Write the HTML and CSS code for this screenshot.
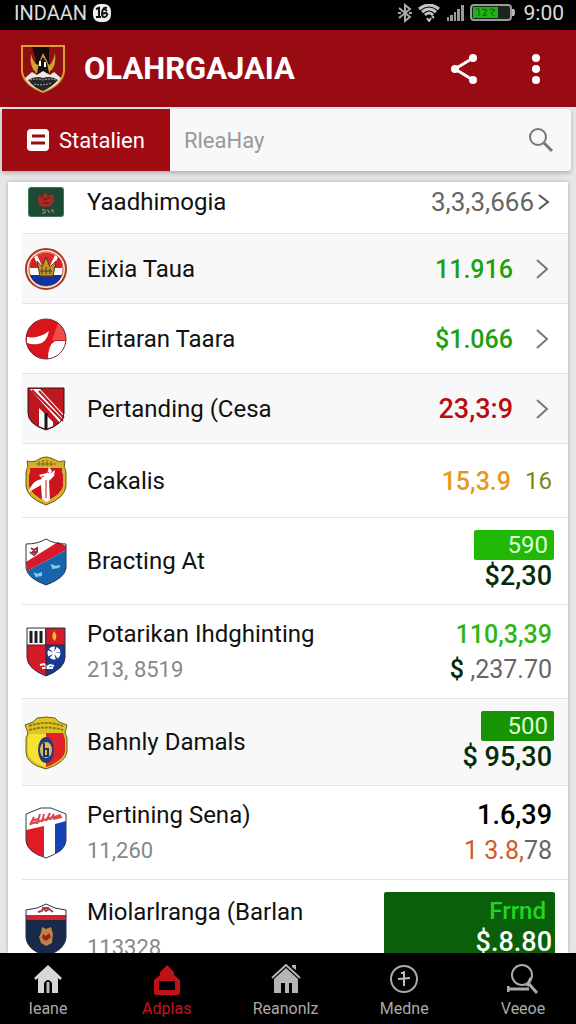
FILE: index.html
```
<!DOCTYPE html>
<html lang="id">
<head>
    <title>OLAHRGAJAIA</title>
    <meta charset="UTF-8">
    <meta name="viewport" content="width=device-width, initial-scale=1.0">
    <link rel="stylesheet" href="styles.css">
</head>
<body>
    <div class="status-bar">
        <span class="carrier">INDAAN</span>
        <svg width="18" height="18" viewBox="0 0 18 18"><rect width="18" height="18" rx="7" fill="#eee"/><path d="M3 5l3-1v9M3 13h5M14 4c-4-1-5 3-5 6 0 4 4 4 5 1 1-2-2-3-4-1M10 4l4 3" fill="none" stroke="#111" stroke-width="2"/></svg>
        <div class="status-icons">
            <svg width="14" height="20" viewBox="0 0 14 20"><path d="M1 5l11 9-5 4V2l5 4-11 9M0 10h3M11 10h3" fill="none" stroke="#aaa" stroke-width="2"/></svg>
            <svg width="22" height="18" viewBox="0 0 22 18"><path d="M1 5q10-8 20 0M4 8q7-6 14 0M7 11q4-4 8 0" fill="none" stroke="#c4c4c4" stroke-width="3"/><path d="M9 14l2 3 2-3M14 12l2 2" fill="none" stroke="#c4c4c4" stroke-width="2"/></svg>
            <svg width="18" height="18" viewBox="0 0 18 18"><path d="M1 13h2v4H1zM4 11h3v6H4zM8 8h2v9H8zM11 5h3v12h-3zM15 1h3v16h-3z" fill="#999"/></svg>
            <svg width="46" height="18" viewBox="0 0 46 18"><rect x="1" y="1" width="40" height="15" rx="3" fill="#1c2420" stroke="#9a9a9a" stroke-width="2"/><path d="M42 5h2q2 3 0 7h-2z" fill="#bbb"/><rect x="3" y="3" width="25" height="11" fill="#1fb012"/><path d="M6 5h3v7M12 5l5 1-4 6 4-1M20 5l5 1-4 3 3 3" fill="none" stroke="#0a5a08" stroke-width="1"/></svg>
            <span class="clock">9:00</span>
        </div>
    </div>

    <header class="header">
        <svg class="logo" width="46" height="50" viewBox="0 0 46 50">
            <path d="M1 1h44v26q-1 14-22 22Q2 41 1 27z" fill="#d9a32b"/>
            <path d="M3 3h40v24q-1 12-20 20Q4 39 3 27z" fill="#8f1013"/>
            <path d="M12 3h17v13l3 12H14l2-12z" fill="#160b0a"/>
            <path d="M11 10q-2 12 5 19h13q8-7 6-20-2 10-6 12l-6-12-5 12q-5-2-7-11z" fill="#d0a236"/>
            <path d="M17 29l2-10 4-6 4 6 2 10z" fill="#17120f"/>
            <path d="M20 17v5M25 18v5" stroke="#fff" stroke-width="2"/>
            <path d="M5 34l7-6 5 3 6-4 7 4 4-3 7 6q-4 9-18 13Q9 43 5 34z" fill="#eee8e2"/>
            <path d="M8 36q8-5 15-2 8-3 15 2-6 7-15 11-9-3-15-11z" fill="#252629"/>
            <path d="M10 36q7-2 13 0 7-2 13 0M14 40q9 2 18-1" fill="none" stroke="#aaa" stroke-width="1" stroke-dasharray="2 1"/>
        </svg>
        <h1>OLAHRGAJAIA</h1>
        <button class="icon-button share" aria-label="Share">
            <svg width="28" height="32" viewBox="0 0 28 32"><path d="M23 5L5 16l18 11" fill="none" stroke="#fff" stroke-width="3"/><circle cx="23" cy="5" r="4" fill="#fff"/><circle cx="5" cy="16" r="4" fill="#fff"/><circle cx="23" cy="27" r="4" fill="#fff"/></svg>
        </button>
        <button class="icon-button" aria-label="More">
            <svg width="10" height="32" viewBox="0 0 10 32"><circle cx="5" cy="5" r="4" fill="#fff"/><circle cx="5" cy="16" r="4" fill="#fff"/><circle cx="5" cy="27" r="4" fill="#fff"/></svg>
        </button>
    </header>

    <div class="toolbar">
        <button class="filter">
            <svg width="22" height="22" viewBox="0 0 22 22"><rect width="22" height="22" rx="4" fill="#fff"/><path d="M5 7h13M4 14h14" stroke="#9c0a12" stroke-width="3"/></svg>
            Statalien
        </button>
        <input type="text" class="search" placeholder="RleaHay" aria-label="Search">
        <button class="icon-button search-button" aria-label="Search">
            <svg width="26" height="26" viewBox="0 0 26 26"><circle cx="10" cy="10" r="8" fill="none" stroke="#777" stroke-width="2"/><path d="M16 16l8 8" stroke="#777" stroke-width="3"/></svg>
        </button>
    </div>

    <main class="list">
        <div class="row first">
            <div class="crest"><svg width="36" height="30" viewBox="0 0 36 30"><rect width="36" height="30" rx="3" fill="#3f7a56"/><rect x="1" y="1" width="34" height="28" rx="2" fill="#1c4a35"/><path d="M10 8l4 2 3-5 3 4 5-2 1 6q-1 7-8 7t-8-6z" fill="#a32a26"/><path d="M14 10l3 3 5-3M15 16h6" fill="none" stroke="#571518" stroke-width="1"/><path d="M14 23h3v3h-3M19 23l2 1v2M23 23h2v3" fill="none" stroke="#c98a6a" stroke-width="1"/></svg></div>
            <div class="name">Yaadhimogia</div>
            <div class="amount gray">3,3,3,666</div>
            <svg class="chevron" width="18" height="20" viewBox="0 0 18 20"><path d="M5 3l9 7-9 7" fill="none" stroke="#555" stroke-width="2"/></svg>
        </div>
        <div class="row shade">
            <div class="crest"><svg width="42" height="44" viewBox="0 0 42 44"><circle cx="21" cy="22" r="20" fill="#f5e6d0" stroke="#a8372a" stroke-width="2"/><circle cx="21" cy="22" r="17" fill="#fff" stroke="#cc4a35" stroke-width="1"/><path d="M12 8q9-5 18 0l-5 11h-8z" fill="#e02a2e"/><path d="M5 17q1-5 4-7l5 11H5zM37 17q-1-5-4-7l-5 11h9z" fill="#d91f25"/><path d="M5 28h32q-4 11-16 11T5 28z" fill="#12329c"/><path d="M12 14l5 6 4-10 4 10 6-6-3 15H15z" fill="#c6952a" stroke="#523913" stroke-width="1"/><path d="M15 24h12M17 21v6M21 20v7M25 21v6" stroke="#523913" stroke-width="1"/></svg></div>
            <div class="name">Eixia Taua</div>
            <div class="amount green">11.916</div>
            <svg class="chevron" width="20" height="20" viewBox="0 0 20 20"><path d="M5 1l10 9-10 9" fill="none" stroke="#777" stroke-width="2"/></svg>
        </div>
        <div class="row">
            <div class="crest"><svg width="42" height="44" viewBox="0 0 42 44"><circle cx="21" cy="22" r="20" fill="#d9141b"/><path d="M33 6q8 7 8 17H27z" fill="#f04a49"/><path d="M2 20q12 2 22-6-2 12-11 13-6 1-11-1zM41 24H30q-7 4-7 18 17-2 18-18z" fill="#fff"/><circle cx="21" cy="22" r="20" fill="none" stroke="#6d3137" stroke-width="1"/></svg></div>
            <div class="name">Eirtaran Taara</div>
            <div class="amount green">$1.066</div>
            <svg class="chevron" width="20" height="20" viewBox="0 0 20 20"><path d="M5 1l10 9-10 9" fill="none" stroke="#777" stroke-width="2"/></svg>
        </div>
        <div class="row shade">
            <div class="crest"><svg width="38" height="44" viewBox="0 0 38 44"><path d="M1 1h36v25q0 11-18 17Q1 37 1 26z" fill="#bd1820"/><path d="M3 2h10l24 26v5l-3 4z" fill="#fff"/><path d="M5 3l31 31M12 4l25 27" stroke="#bd1820" stroke-width="2"/><path d="M12 21l14 14v4l-7 3-7-3z" fill="#fff"/><path d="M19 26v16" stroke="#151515" stroke-width="3"/><path d="M1 1h36v25q0 11-18 17Q1 37 1 26z" fill="none" stroke="#221618" stroke-width="1"/></svg></div>
            <div class="name">Pertanding (Cesa</div>
            <div class="amount red">23,3:9</div>
            <svg class="chevron" width="20" height="20" viewBox="0 0 20 20"><path d="M5 1l10 9-10 9" fill="none" stroke="#777" stroke-width="2"/></svg>
        </div>
        <div class="row">
            <div class="crest"><svg width="42" height="50" viewBox="0 0 42 50"><path d="M2 5q8 2 12-2 7-4 14 0 5 4 12 2-2 5 1 11v14q-1 12-20 19Q2 42 1 30V16q3-6 1-11z" fill="#d5b12e" stroke="#6c5713" stroke-width="1"/><path d="M5 12h32q-1 4 1 7v11q-2 9-17 15Q6 39 4 30V19q2-3 1-7z" fill="#cd151d"/><path d="M5 32q4-8 12-9l-3-4 8-2 2-6 3 4-2 3 5-4-1 6-5 5 1 19-4 2-4-3-1-14-12 7z" fill="#fff"/><path d="M14 17q7-3 10 0M14 22l5-2M21 24v18" fill="none" stroke="#cd151d" stroke-width="1"/><path d="M11 8h20M14 5v5M18 4v6M22 4v6M26 5v5" stroke="#79641a" stroke-width="1"/></svg></div>
            <div class="name">Cakalis</div>
            <div class="amount orange">15,3.9</div>
            <div class="amount olive">16</div>
        </div>
        <div class="row">
            <div class="crest"><svg width="42" height="48" viewBox="0 0 42 48"><path d="M1 6q12 0 20-5 8 5 20 5v24q-1 10-20 17Q2 40 1 30z" fill="#fff"/><path d="M41 12v18q-1 10-20 17Q5 41 2 33z" fill="#1865ae"/><path d="M1 24L33 4l8 4v4L2 33z" fill="#d8182b"/><path d="M6 10l3 2 3-2v4l-3 3-4-3M7 14h4" fill="none" stroke="#92324a" stroke-width="2"/><path d="M26 27l4 2 5-1M27 30l7-1M9 35l3 2 5-2M10 38l7-1" fill="none" stroke="#81cfe2" stroke-width="2"/><path d="M1 6q12 0 20-5 8 5 20 5v24q-1 10-20 17Q2 40 1 30z" fill="none" stroke="#28364a" stroke-width="1"/></svg></div>
            <div class="name">Bracting At</div>
            <div class="values">
                <span class="badge">590</span>
                <span class="amount dark">$2,30</span>
            </div>
        </div>
        <div class="row">
            <div class="crest"><svg width="40" height="50" viewBox="0 0 40 50"><path d="M1 1h38v30q-1 11-19 18Q2 42 1 31z" fill="#d31c27"/><path d="M20 18h19v13q-1 11-19 18z" fill="#173b91"/><path d="M1 1h18v17H1z" fill="#fff"/><path d="M5 4v12M10 4v12M15 4v12" stroke="#1b1b20" stroke-width="3"/><path d="M28 4q4 4 1 10-5-3-1-10z" fill="#f1bc29"/><circle cx="28" cy="26" r="4" fill="none" stroke="#fff" stroke-width="5" stroke-dasharray="4 1"/><circle cx="28" cy="26" r="2" fill="#fff"/><path d="M14 38l4-1 3 3 3-2 4 1M16 41h11" fill="none" stroke="#fff" stroke-width="2"/><path d="M1 18h38M20 1v48" stroke="#521a32" stroke-width="1"/><path d="M1 1h38v30q-1 11-19 18Q2 42 1 31z" fill="none" stroke="#25304b" stroke-width="1"/></svg></div>
            <div class="name">Potarikan Ihdghinting<small>213, 8519</small></div>
            <div class="values">
                <span class="amount lime">110,3,39</span>
                <span class="amount gray"><b class="dark">$</b> ,237.70</span>
            </div>
        </div>
        <div class="row shade">
            <div class="crest"><svg width="44" height="54" viewBox="0 0 44 54"><path d="M1 9l8-3 4-4 9-1 9 1 4 4 8 3-2 8 2 5v14q-2 11-21 17Q2 48 2 36V22l2-5z" fill="#dfc426" stroke="#67602b" stroke-width="1"/><path d="M22 17h17l2 6v13q-2 9-19 15z" fill="#e0232b"/><path d="M5 18h17v33Q5 46 4 36V22z" fill="#f5e332"/><ellipse cx="22" cy="34" rx="8" ry="13" fill="#243a79"/><ellipse cx="22" cy="34" rx="6" ry="8" fill="#d9bf5d"/><path d="M20 27v13h4v-7h-4" fill="none" stroke="#25345d" stroke-width="2"/><path d="M5 10q17-6 34 0M5 14q17-5 34 0" fill="none" stroke="#8d7717" stroke-width="2" stroke-dasharray="3 1"/></svg></div>
            <div class="name">Bahnly Damals</div>
            <div class="values">
                <span class="badge narrow">500</span>
                <span class="amount dark">$ 95,30</span>
            </div>
        </div>
        <div class="row">
            <div class="crest"><svg width="42" height="52" viewBox="0 0 42 52"><path d="M1 7l15-6h10l15 6v27q-1 10-20 17Q2 45 1 34z" fill="#fff"/><path d="M1 23l18-4v31Q2 45 1 34z" fill="#e01b24"/><path d="M30 17l11-3v20q-1 9-11 13z" fill="#1742b3"/><path d="M5 18l4-8M6 14l7-2M12 17l3-10M17 15l2-8M21 14l4-8M25 13l4-6M5 17l31-9M28 12l9-2" stroke="#d9484e" stroke-width="2"/><path d="M1 7l15-6h10l15 6v27q-1 10-20 17Q2 45 1 34z" fill="none" stroke="#333a4c" stroke-width="1"/></svg></div>
            <div class="name">Pertining Sena)<small>11,260</small></div>
            <div class="values">
                <span class="amount black">1.6,39</span>
                <span class="amount gray"><span class="rust">1 3.8,</span>78</span>
            </div>
        </div>
        <div class="row last">
            <div class="crest"><svg width="42" height="54" viewBox="0 0 42 54"><path d="M1 7q12-1 20-6 8 5 20 6v28q-1 12-20 18Q2 47 1 35z" fill="#fff"/><path d="M1 17h40v18q-1 12-20 18Q2 47 1 35z" fill="#18294a"/><path d="M1 12h40v5H1z" fill="#d7212c"/><path d="M13 9l4-1 1-3 3 3 3-2 4 3M18 5h6" fill="none" stroke="#a63c4a" stroke-width="2"/><path d="M17 24l4 2 5-2 2 7-1 9-6 3-5-3-2-6 2-4z" fill="#bb8442"/><path d="M18 31l3 2 3-3 2 4-5 4-4-3z" fill="#a61a24"/><path d="M1 7q12-1 20-6 8 5 20 6v28q-1 12-20 18Q2 47 1 35z" fill="none" stroke="#29344a" stroke-width="1"/></svg></div>
            <div class="name">Miolarlranga (Barlan<small>113328</small></div>
            <div class="values panel">
                <span class="amount bright">Frrnd</span>
                <span class="amount white">$.8.80</span>
            </div>
        </div>
    </main>

    <nav class="tabs">
        <a href="#">
            <svg width="30" height="30" viewBox="0 0 30 30"><path d="M15 1l14 13-2 2-2-2v15h-6V19q-4-6-8 0v10H5V14l-2 2-2-2z" fill="#d6d6d6"/><path d="M15 18v11" stroke="#bbb" stroke-width="3"/></svg>
            Ieane
        </a>
        <a href="#" class="active">
            <svg width="30" height="32" viewBox="0 0 30 32"><path d="M15 1l7 7v3l6 5v13q0 2-2 2H4q-2 0-2-2V16l6-5V8zM7 17v9h16v-9z" fill="#c01018" fill-rule="evenodd"/></svg>
            Adplas
        </a>
        <a href="#">
            <svg width="30" height="30" viewBox="0 0 30 30"><path d="M1 14L15 1l14 13" fill="none" stroke="#b5b5b5" stroke-width="2"/><path d="M15 4l12 11v14h-6V19h-3v10h-4V19h-4v10H3V15zM21 1h4v5l-4-3z" fill="#b5b5b5"/></svg>
            Reanonlz
        </a>
        <a href="#">
            <svg width="30" height="30" viewBox="0 0 30 30"><circle cx="15" cy="15" r="13" fill="none" stroke="#aaa" stroke-width="2"/><path d="M15 7v15M9 15l12-1M12 9h3" stroke="#bbb" stroke-width="2"/></svg>
            Medne
        </a>
        <a href="#">
            <svg width="32" height="30" viewBox="0 0 32 30"><circle cx="15" cy="11" r="10" fill="none" stroke="#aaa" stroke-width="2"/><path d="M1 25h21M1 22v6M22 20l8 9M24 14l-4 8" fill="none" stroke="#aaa" stroke-width="3"/></svg>
            Veeoe
        </a>
    </nav>
</body>
</html>
```
FILE: styles.css
```
* {
    box-sizing: border-box;
}
body {
    display: flex;
    flex-direction: column;
    height: 100vh;
    margin: 0;
    overflow: hidden;
    background-color: #e6e6e8;
    color: #111;
    font-family: Roboto, sans-serif;
}
button {
    border: none;
    padding: 0;
    background: none;
    font-family: inherit;
    cursor: pointer;
}
svg {
    display: block;
    flex: none;
}
.status-bar {
    display: flex;
    align-items: center;
    flex: none;
    gap: 6px;
    height: 30px;
    padding: 0 12px 4px 14px;
    background-color: #000;
    color: #ddd;
}
.carrier {
    font-size: 20px;
}
.status-icons {
    display: flex;
    align-items: center;
    gap: 6px;
    margin-left: auto;
}
.clock {
    margin-left: 2px;
    font-size: 21px;
}
.header {
    display: flex;
    align-items: center;
    flex: none;
    height: 77px;
    padding: 0 35px 0 20px;
    background-color: #980b12;
    color: white;
}
.header h1 {
    flex: 1;
    margin: 0 0 0 18px;
    font-size: 31px;
    font-weight: bold;
}
.share {
    margin-right: 53px;
}
.toolbar {
    display: flex;
    align-items: center;
    flex: none;
    height: 62px;
    margin: 2px 5px 0 2px;
    background-color: #f8f8f8;
    border-radius: 3px;
    box-shadow: 0 2px 4px rgba(0, 0, 0, 0.25);
}
.filter {
    display: flex;
    align-items: center;
    gap: 10px;
    height: 100%;
    padding: 0 25px;
    background-color: #a00b14;
    color: white;
    font-size: 22px;
}
.search {
    flex: 1;
    min-width: 0;
    border: none;
    padding: 0 14px;
    background: none;
    font-family: inherit;
    font-size: 22px;
}
.search::placeholder {
    color: #999;
}
.search-button {
    margin-right: 17px;
}
.list {
    flex: 1;
    min-height: 0;
    margin: 11px 8px 0;
    overflow: hidden;
    background-color: #fff;
    box-shadow: 0 0 4px rgba(0, 0, 0, 0.25);
}
.row {
    display: flex;
    align-items: center;
    min-height: 70px;
    margin-left: 14px;
    padding: 12px 16px 11px 0;
    border-bottom: 1px solid #e4e4e4;
}
.row.shade {
    background-color: #f8f8f8;
}
.row.first {
    min-height: 52px;
    padding-top: 0;
}
.row.last {
    min-height: 100px;
}
.crest {
    display: flex;
    justify-content: center;
    flex: none;
    width: 48px;
    margin-right: 17px;
}
.name {
    flex: 1;
    font-size: 24px;
    line-height: 35px;
    white-space: nowrap;
}
.name small {
    display: block;
    color: #888;
    font-size: 22px;
}
.amount {
    font-size: 27px;
    line-height: 35px;
    white-space: nowrap;
}
.chevron {
    margin-left: 19px;
}
.first .chevron {
    margin-left: 0;
}
.values {
    display: flex;
    flex-direction: column;
    align-items: flex-end;
}
.badge {
    width: 80px;
    margin-right: -2px;
    padding-right: 6px;
    border-radius: 2px;
    background-color: #21b806;
    color: #dcffd4;
    font-size: 24px;
    line-height: 30px;
    text-align: right;
}
.badge.narrow {
    width: 73px;
    background-color: #169404;
}
.badge + .amount {
    line-height: 33px;
}
.gray {
    color: #666;
    font-size: 26px;
}
.values .gray {
    font-size: 25px;
}
.green {
    color: #1da00e;
    font-size: 25px;
    font-weight: 500;
}
.lime {
    color: #2fb516;
    font-size: 25px;
    font-weight: 500;
}
.red {
    color: #b90d12;
    font-weight: 500;
}
.orange {
    color: #e39a1b;
    font-size: 25px;
    font-weight: 500;
}
.olive {
    margin-left: 14px;
    color: #79861c;
    font-size: 24px;
}
.dark {
    color: #062b08;
    font-weight: 500;
}
.black {
    color: #000;
    font-weight: 500;
}
.rust {
    color: #d05a25;
}
.bright {
    margin-right: 6px;
    color: #25d422;
    font-size: 24px;
    font-weight: 500;
}
.white {
    color: #fff;
    font-weight: 500;
}
.panel {
    align-self: stretch;
    width: 171px;
    margin-right: -3px;
    padding: 4px 3px 0 0;
    border-radius: 2px;
    background-color: #0a5f0b;
}
.panel .amount {
    line-height: 31px;
}
.tabs {
    display: flex;
    justify-content: space-between;
    flex: none;
    height: 71px;
    padding: 11px 13px 0 8px;
    background-color: #000;
}
.tabs a {
    display: flex;
    flex-direction: column;
    align-items: center;
    justify-content: space-between;
    width: 80px;
    height: 55px;
    color: #aaa;
    font-size: 16px;
    line-height: 20px;
    text-decoration: none;
}
.tabs .active {
    color: #c8141c;
}
```
